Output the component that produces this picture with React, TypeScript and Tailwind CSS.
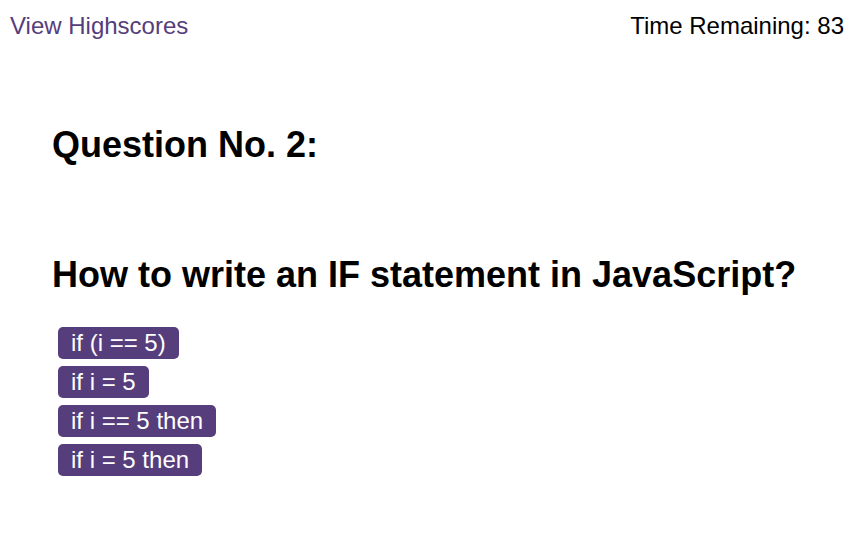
const choices = ["if (i == 5)", "if i = 5", "if i == 5 then", "if i = 5 then"]

export default function App() {
  return (
    <div className="min-h-[546px] bg-white font-['Liberation_Sans',Arial,sans-serif] text-black">
      <header className="flex items-start justify-between pl-[10px] pr-[13px] pt-[12px] text-[24px] leading-[28px]">
        <a href="#" className="text-[#563d7c]">
          View Highscores
        </a>
        <p>Time Remaining: 83</p>
      </header>

      <main className="pl-[52px]">
        <h2 className="mt-[84px] text-[36px] font-bold leading-[41px]">Question No. 2:</h2>
        <h2 className="mt-[89px] text-[36px] font-bold leading-[41px]">
          How to write an IF statement in JavaScript?
        </h2>

        <div className="mt-[32px] flex flex-col items-start gap-[7px] pl-[6px]">
          {choices.map((choice) => (
            <button
              key={choice}
              type="button"
              className="rounded-[5px] bg-[#563d7c] px-[13px] py-[2px] text-[24px] leading-[28px] text-white"
            >
              {choice}
            </button>
          ))}
        </div>
      </main>
    </div>
  )
}
